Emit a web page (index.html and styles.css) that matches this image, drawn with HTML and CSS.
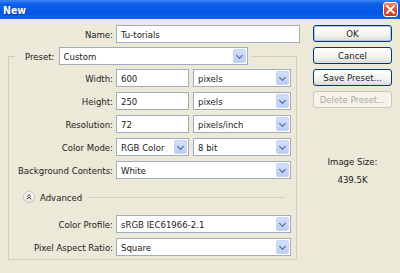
FILE: index.html
```html
<!DOCTYPE html>
<html>
<head>
    <title>New</title>
    <meta charset="UTF-8">
    <link rel="stylesheet" href="styles.css">
</head>
<body>
    <div class="window">
        <div class="titlebar">
            <span class="title">New</span>
            <span class="close">
                <svg width="9" height="9" viewBox="0 0 9 9"><path d="M1 1 L8 8 M8 1 L1 8" stroke="#fff" stroke-width="1.8" stroke-linecap="round"/></svg>
            </span>
        </div>

        <div class="content">
            <div class="main">
                <div class="name-row">
                    <label>Name:</label>
                    <div class="field">Tu-torials</div>
                </div>

                <fieldset class="group">
                    <legend>
                        <label>Preset:</label>
                        <div class="field dropdown preset">Custom<span class="arrow"></span></div>
                    </legend>

                    <div class="row">
                        <label>Width:</label>
                        <div class="pair">
                            <div class="field num">600</div>
                            <div class="field dropdown unit">pixels<span class="arrow"></span></div>
                        </div>
                    </div>
                    <div class="row">
                        <label>Height:</label>
                        <div class="pair">
                            <div class="field num">250</div>
                            <div class="field dropdown unit">pixels<span class="arrow"></span></div>
                        </div>
                    </div>
                    <div class="row">
                        <label>Resolution:</label>
                        <div class="pair">
                            <div class="field num">72</div>
                            <div class="field dropdown unit">pixels/inch<span class="arrow"></span></div>
                        </div>
                    </div>
                    <div class="row">
                        <label>Color Mode:</label>
                        <div class="pair">
                            <div class="field dropdown mode">RGB Color<span class="arrow"></span></div>
                            <div class="field dropdown unit">8 bit<span class="arrow"></span></div>
                        </div>
                    </div>
                    <div class="row">
                        <label>Background Contents:</label>
                        <div class="field dropdown">White<span class="arrow"></span></div>
                    </div>

                    <div class="advanced">
                        <span class="toggle">
                            <svg width="12" height="12" viewBox="0 0 12 12">
                                <path d="M3.5 5.5 L6 3.2 L8.5 5.5 M3.5 8.5 L6 6.2 L8.5 8.5" fill="none" stroke="#333" stroke-width="1.2"/>
                            </svg>
                        </span>
                        <span>Advanced</span>
                        <span class="rule"></span>
                    </div>

                    <div class="row">
                        <label>Color Profile:</label>
                        <div class="field dropdown">sRGB IEC61966-2.1<span class="arrow"></span></div>
                    </div>
                    <div class="row">
                        <label>Pixel Aspect Ratio:</label>
                        <div class="field dropdown">Square<span class="arrow"></span></div>
                    </div>
                </fieldset>
            </div>

            <div class="side">
                <button class="btn default">OK</button>
                <button class="btn">Cancel</button>
                <button class="btn">Save Preset...</button>
                <button class="btn" disabled>Delete Preset...</button>
                <div class="size-info">
                    <div>Image Size:</div>
                    <div>439.5K</div>
                </div>
            </div>
        </div>
    </div>
</body>
</html>
```

FILE: styles.css
```css
* {
    margin: 0;
    padding: 0;
    box-sizing: border-box;
}

body {
    font-family: 'DejaVu Sans Condensed', 'DejaVu Sans', sans-serif;
    font-size: 9.5px;
    color: #222;
    background: #ece9d8;
}

.window {
    width: 400px;
    height: 273px;
    background: #ece9d8;
}

.titlebar {
    height: 19px;
    display: flex;
    align-items: center;
    justify-content: space-between;
    padding: 0 2px 0 3px;
    background: linear-gradient(to bottom, #3b86f5 0%, #0c5fe6 20%, #0256e4 70%, #1463e8 100%);
}

.title {
    color: #fff;
    font-weight: bold;
    font-size: 10.5px;
    text-shadow: 1px 1px 0 #0b3a9c;
}

.close {
    width: 15px;
    height: 15px;
    display: flex;
    align-items: center;
    justify-content: center;
    border: 1px solid #fff;
    border-radius: 3px;
    background: linear-gradient(to bottom, #e98a6a 0%, #d9552f 45%, #c6421b 100%);
}

.content {
    display: flex;
    padding: 6px 0 0 8px;
}

.main {
    width: 292px;
}

.name-row {
    display: grid;
    grid-template-columns: 105px 184px;
    column-gap: 3px;
    align-items: center;
}

label {
    text-align: right;
    white-space: nowrap;
}

.field {
    height: 18px;
    display: flex;
    align-items: center;
    padding-left: 4px;
    background: #fff;
    border: 1px solid #a3acbd;
    position: relative;
}

.dropdown .arrow {
    position: absolute;
    right: 1px;
    top: 1px;
    bottom: 1px;
    width: 13px;
    border-radius: 2px;
    background: linear-gradient(to bottom, #d3def9 0%, #bccdf6 100%);
    border: 1px solid #c6d4f3;
}

.dropdown .arrow::after {
    content: '';
    position: absolute;
    left: 3px;
    top: 3px;
    width: 4px;
    height: 4px;
    border-right: 1.6px solid #4d6185;
    border-bottom: 1.6px solid #4d6185;
    transform: rotate(45deg);
}

.group {
    width: 289px;
    margin-top: 4px;
    border: 1px solid #d0d0bf;
    padding: 4px 0 3px 0;
    display: flex;
    flex-direction: column;
    gap: 5px;
}

legend {
    display: flex;
    align-items: center;
    gap: 4px;
    margin-left: 6px;
    padding: 0 3px 0 10px;
}

.preset {
    width: 189px;
}

.row {
    display: grid;
    grid-template-columns: 104px 175px;
    column-gap: 3px;
    align-items: center;
}

.pair {
    display: flex;
    gap: 4px;
}

.num {
    width: 73px;
}

.mode {
    width: 73px;
}

.unit {
    width: 98px;
}

.advanced {
    display: flex;
    align-items: center;
    gap: 5px;
    height: 12px;
    margin: 7px 11px 7px 14px;
}

.toggle {
    width: 12px;
    height: 12px;
    border-radius: 50%;
    border: 1px solid #c9c7ba;
    background: linear-gradient(to bottom, #fff 0%, #e4e2d6 100%);
    display: flex;
    align-items: center;
    justify-content: center;
}

.toggle svg {
    width: 10px;
    height: 10px;
}

.rule {
    flex: 1;
    height: 1px;
    margin-left: 2px;
    background: #d0d0bf;
}

.side {
    width: 79px;
    margin-left: 13px;
    display: flex;
    flex-direction: column;
    gap: 5px;
}

.btn {
    height: 17px;
    font-family: inherit;
    font-size: 9.5px;
    color: #222;
    border: 1px solid #003c74;
    border-radius: 3px;
    background: linear-gradient(to bottom, #ffffff 0%, #f3f3ee 60%, #dcdbd2 100%);
}

.btn.default {
    box-shadow: inset 0 0 0 1px #aec5f0;
}

.btn:disabled {
    color: #aca899;
    border-color: #c9c7ba;
    background: #f5f4ea;
}

.size-info {
    margin-top: 40px;
    text-align: center;
    line-height: 18px;
}
```
